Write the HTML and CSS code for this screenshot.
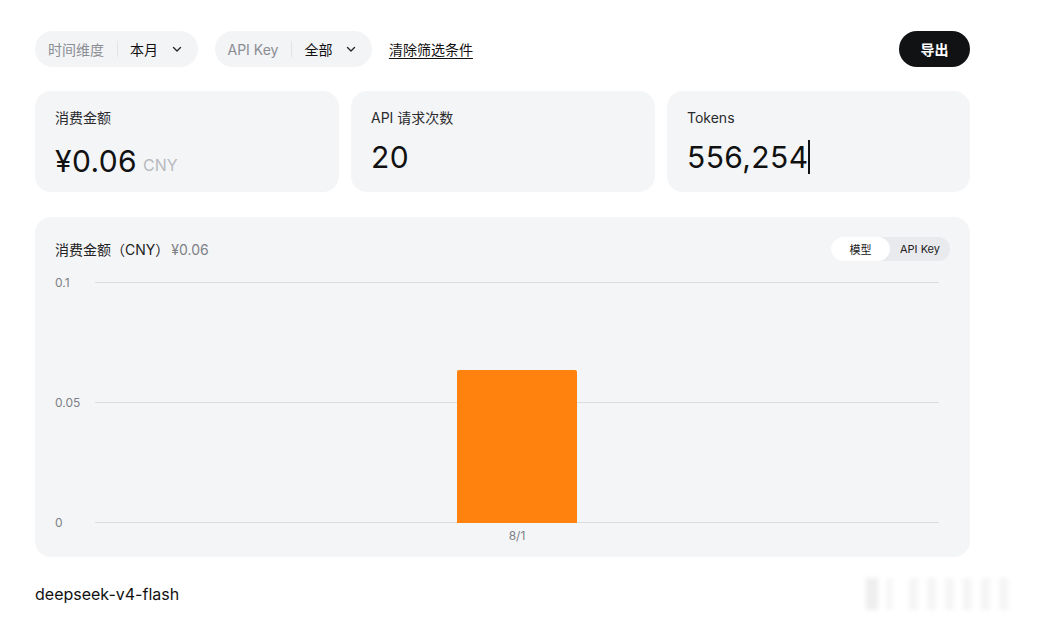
FILE: index.html
```html
<!DOCTYPE html>
<html lang="zh-CN">
<head>
<meta charset="utf-8">
<title>用量</title>
<link rel="stylesheet" href="styles.css">
</head>
<body>
<main class="page">
  <div class="toolbar">
    <div class="filters">
      <button class="pill">
        <span class="pill-label">时间维度</span>
        <span class="pill-sep"></span>
        <span class="pill-value">本月</span>
        <svg class="chev" viewBox="0 0 12 12" width="12" height="12"><path d="M2.5 4.5 6 8l3.5-3.5" fill="none" stroke="#222" stroke-width="1.3" stroke-linecap="round" stroke-linejoin="round"/></svg>
      </button>
      <button class="pill">
        <span class="pill-label">API Key</span>
        <span class="pill-sep"></span>
        <span class="pill-value">全部</span>
        <svg class="chev" viewBox="0 0 12 12" width="12" height="12"><path d="M2.5 4.5 6 8l3.5-3.5" fill="none" stroke="#222" stroke-width="1.3" stroke-linecap="round" stroke-linejoin="round"/></svg>
      </button>
      <a class="clear-link" href="#">清除筛选条件</a>
    </div>
    <button class="export-btn">导出</button>
  </div>

  <div class="stats">
    <div class="stat-card">
      <div class="stat-label">消费金额</div>
      <div class="stat-value">¥0.06<span class="stat-unit">CNY</span></div>
    </div>
    <div class="stat-card">
      <div class="stat-label">API 请求次数</div>
      <div class="stat-value">20</div>
    </div>
    <div class="stat-card">
      <div class="stat-label">Tokens</div>
      <div class="stat-value">556,254<span class="caret"></span></div>
    </div>
  </div>

  <section class="chart-card">
    <div class="chart-head">
      <div class="chart-title">消费金额（CNY）<span class="chart-total">¥0.06</span></div>
      <div class="toggle">
        <span class="toggle-item active">模型</span>
        <span class="toggle-item">API Key</span>
      </div>
    </div>
    <div class="plot">
      <div class="grid-row"><span class="y-label">0.1</span><span class="grid-line"></span></div>
      <div class="grid-row"><span class="y-label">0.05</span><span class="grid-line"></span></div>
      <div class="grid-row"><span class="y-label">0</span><span class="grid-line"></span></div>
      <div class="bar" style="height:153px"></div>
    </div>
    <div class="x-axis"><span>8/1</span></div>
  </section>

  <div class="model-name">deepseek-v4-flash</div>
</main>
<div class="watermark" aria-hidden="true">
  <span class="wm w1"></span><span class="wm w2"></span><span class="wm w3"></span><span class="wm w4"></span><span class="wm w5"></span><span class="wm w6"></span><span class="wm w7"></span><span class="wm w8"></span>
</div>
</body>
</html>
```
FILE: styles.css
```css
* { box-sizing: border-box; }
html, body { margin: 0; background: #fff; }
body {
  font-family: Inter, "Noto Sans CJK SC", sans-serif;
  color: #111;
  width: 1057px;
  height: 622px;
  overflow: hidden;
  position: relative;
}
.page {
  width: 935px;
  margin-left: 35px;
  padding-top: 31px;
}
.toolbar {
  display: flex;
  justify-content: space-between;
  align-items: center;
  height: 36px;
}
.filters {
  display: flex;
  align-items: center;
  gap: 17px;
}
.pill {
  display: flex;
  align-items: center;
  height: 36px;
  padding: 0 14.5px 0 13px;
  border: none;
  border-radius: 18px;
  background: #f3f4f6;
  font-family: inherit;
  font-size: 14px;
  cursor: pointer;
}
.pill-label { color: #8a8d93; }
.pill-sep {
  width: 1px;
  height: 16px;
  background: #e2e3e6;
  margin: 0 12px 0 13px;
}
.pill-value { color: #111; }
.chev { margin-left: 13px; }
.clear-link {
  color: #111;
  font-size: 14px;
  text-decoration: underline;
  text-underline-offset: 3px;
}
.export-btn {
  width: 71px;
  height: 36px;
  border: none;
  border-radius: 18px;
  background: #111214;
  color: #fff;
  font-family: inherit;
  font-size: 14px;
  font-weight: 700;
}
.stats {
  display: grid;
  grid-template-columns: 304px 304px 303px;
  gap: 12px;
  margin-top: 24px;
}
.stat-card {
  height: 101px;
  background: #f4f5f7;
  border-radius: 16px;
  padding: 17px 20px 0;
}
.stat-label {
  font-size: 14px;
  line-height: 20px;
  color: #2a2b2e;
}
.stat-value {
  margin-top: 10px;
  font-size: 30px;
  line-height: 38px;
  letter-spacing: 0.4px;
  color: #111;
  display: flex;
  align-items: center;
}
.stat-unit {
  font-size: 16px;
  color: #b8babe;
  margin-left: 6px;
  margin-top: 8px;
  letter-spacing: 0;
}
.caret {
  display: inline-block;
  width: 1.5px;
  height: 34px;
  background: #111;
  margin-left: 0;
}
.chart-card {
  margin-top: 25px;
  background: #f4f5f7;
  border-radius: 16px;
  padding: 20px 20px 13px;
}
.chart-head {
  display: flex;
  justify-content: space-between;
  align-items: center;
  height: 24px;
}
.chart-title {
  font-size: 14px;
  color: #222;
}
.chart-total { color: #7d8086; margin-left: 2px; }
.toggle {
  display: flex;
  background: #e9eaee;
  border-radius: 12px;
  height: 24px;
}
.toggle-item {
  display: flex;
  align-items: center;
  justify-content: center;
  height: 24px;
  padding: 0 10px;
  font-size: 11px;
  color: #222;
  border-radius: 12px;
}
.toggle-item.active {
  background: #fff;
  width: 59px;
}
.plot {
  position: relative;
  height: 241px;
  margin-top: 21px;
  margin-right: 11px;
  display: flex;
  flex-direction: column;
  justify-content: space-between;
}
.grid-row {
  display: flex;
  align-items: center;
  height: 1px;
}
.y-label {
  width: 40px;
  font-size: 12px;
  color: #7d8086;
  line-height: 1px;
}
.grid-line {
  flex: 1;
  height: 1px;
  background: #dcdde1;
}
.bar {
  position: absolute;
  left: 402px;
  bottom: 0;
  width: 120px;
  background: #ff820e;
  border-radius: 2px 2px 0 0;
}
.x-axis {
  margin-top: 5px;
  padding-left: 40px;
  margin-right: 11px;
  display: flex;
  justify-content: center;
  font-size: 12px;
  line-height: 16px;
  color: #7d8086;
}
.model-name {
  margin-top: 27px;
  font-size: 16px;
  line-height: 20px;
  color: #111;
}
.watermark {
  position: absolute;
  left: 866px;
  top: 578px;
  display: flex;
  gap: 9px;
  filter: blur(2px);
}
.wm {
  width: 9px;
  height: 32px;
  background: #f5f5f5;
}
.wm.w1 { width: 12px; background: #eeeeee; }
.wm.w2 { width: 5px; margin-right: 8px; }
```
